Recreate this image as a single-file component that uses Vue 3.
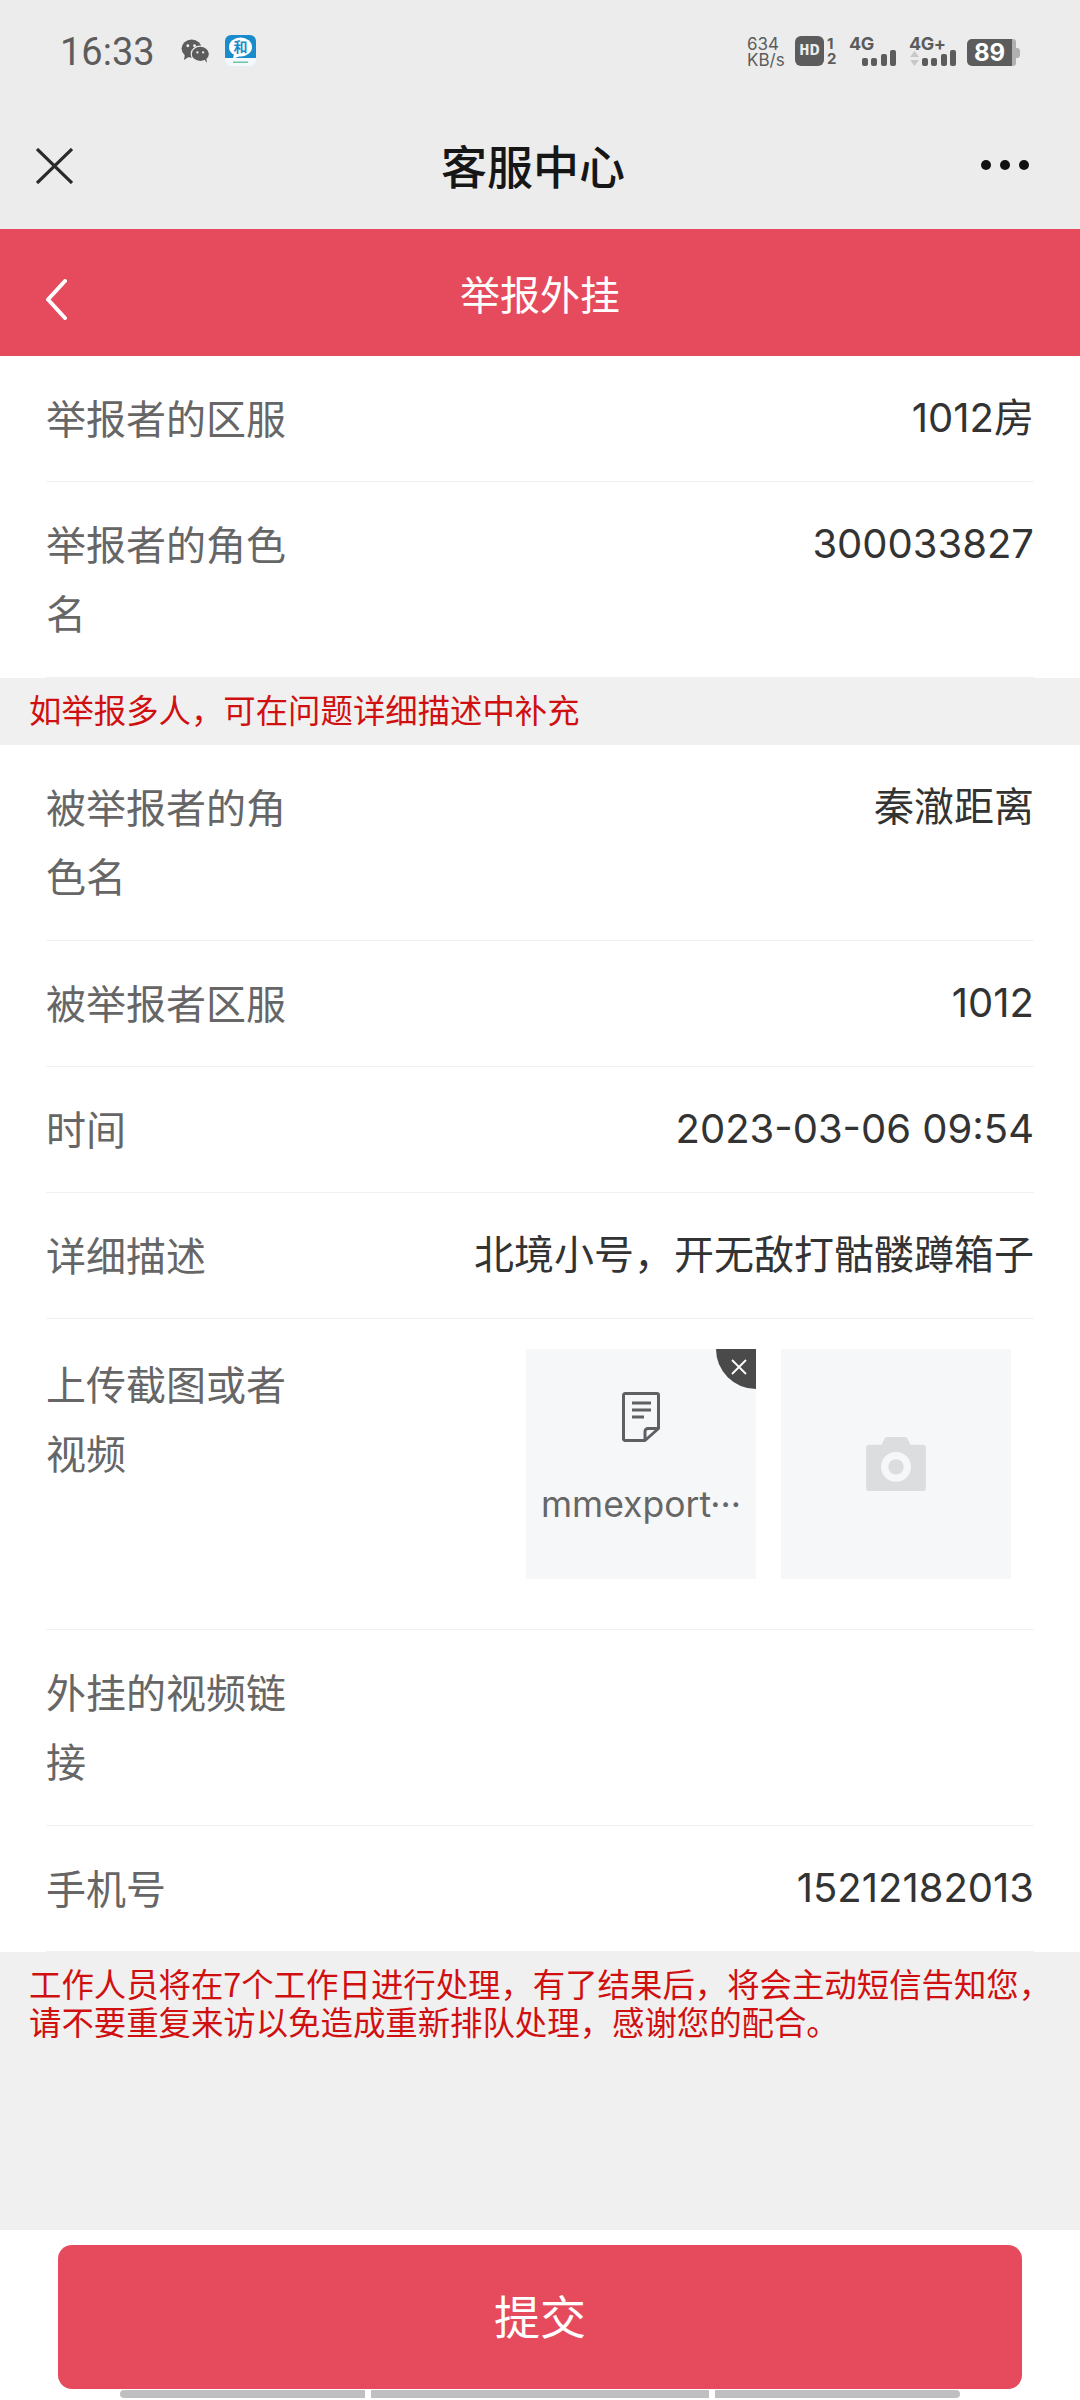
<script setup>
import { ref } from "vue";

const topRows = ref([
  { label: "举报者的区服", value: "1012房" },
  { label: "举报者的角色名", value: "300033827", tall: true },
]);

const midRows = ref([
  { label: "被举报者的角色名", value: "秦澈距离", tall: true },
  { label: "被举报者区服", value: "1012" },
  { label: "时间", value: "2023-03-06 09:54" },
  { label: "详细描述", value: "北境小号，开无敌打骷髅蹲箱子" },
]);

const bottomRows = ref([
  { label: "外挂的视频链接", value: "", tall: true },
  { label: "手机号", value: "15212182013" },
]);
</script>

<template>
  <div class="page">
    <div class="status">
      <span class="time">16:33</span>
      <svg class="wechat" width="29" height="24" viewBox="0 0 30 25">
        <ellipse cx="11" cy="10" rx="10.500" ry="9.500" fill="#5c5c5c" />
        <path d="M4 16l-1 6 6-4z" fill="#5c5c5c" />
        <ellipse cx="20" cy="15.500" rx="9.500" ry="8" fill="#5c5c5c" stroke="#ececec" stroke-width="1.200" />
        <path d="M24 21l3 4-1-6z" fill="#5c5c5c" />
        <circle cx="7" cy="7" r="1.500" fill="#ececec" />
        <circle cx="14" cy="7" r="1.500" fill="#ececec" />
        <circle cx="17" cy="14" r="1.200" fill="#ececec" />
        <circle cx="23" cy="14" r="1.200" fill="#ececec" />
      </svg>
      <svg class="he" width="31" height="31" viewBox="0 0 31 31">
        <rect width="31" height="31" rx="6" fill="#f2f8fb" />
        <path d="M6 0h19a6 6 0 0 1 6 6v17H0V6a6 6 0 0 1 6-6z" fill="#1a8ccb" />
        <ellipse cx="15.500" cy="12" rx="11.500" ry="9.500" fill="#fff" />
        <path d="M9 19l-1 5 7-3z" fill="#fff" />
        <text x="15.500" y="17" text-anchor="middle" font-size="14" font-weight="700" fill="#1a8ccb" font-family="Noto Sans CJK SC">和</text>
        <rect x="8" y="26.500" width="15" height="1.500" fill="#6cc7a4" />
      </svg>
      <span class="spacer"></span>
      <span class="speed">634<br />KB/s</span>
      <span class="hd">HD</span>
      <span class="sim">1<br />2</span>
      <span class="net">
        <b>4G</b>
        <span class="bars"><i class="b1"></i><i class="b2"></i><i class="b3"></i><i class="b4"></i></span>
      </span>
      <span class="net plus">
        <b>4G+</b>
        <svg class="arrows" width="11" height="15" viewBox="0 0 11 15">
          <path d="M5.500 0l4.500 6H1z" fill="#c8c8c8" />
          <path d="M5.500 15l4.500-6H1z" fill="#c8c8c8" />
        </svg>
        <span class="bars"><i class="b1"></i><i class="b2"></i><i class="b3"></i><i class="b4"></i></span>
      </span>
      <span class="battery"><span class="level">89</span><span class="rest"></span><span class="cap"></span></span>
    </div>

    <div class="nav">
      <svg class="close" width="37" height="36" viewBox="0 0 37 36">
        <path d="M1 1l35 34M36 1L1 35" stroke="#2a2a2a" stroke-width="3.200" fill="none" />
      </svg>
      <div class="nav-title">客服中心</div>
      <div class="dots"><i></i><i></i><i></i></div>
    </div>

    <div class="redbar">
      <svg class="back" width="22" height="41" viewBox="0 0 22 41">
        <path d="M20 2L3 20.500 20 39" stroke="#fff" stroke-width="4" stroke-linecap="round" stroke-linejoin="round" fill="none" />
      </svg>
      <div class="red-title">举报外挂</div>
      <div></div>
    </div>

    <div class="group">
      <div v-for="row in topRows" :key="row.label" class="row" :class="{ tall: row.tall }">
        <div class="label">{{ row.label }}</div>
        <div class="value">{{ row.value }}</div>
      </div>
    </div>

    <div class="note one">如举报多人，可在问题详细描述中补充</div>

    <div class="group">
      <div v-for="row in midRows" :key="row.label" class="row" :class="{ tall: row.tall }">
        <div class="label">{{ row.label }}</div>
        <div class="value">{{ row.value }}</div>
      </div>

      <div class="row upload">
        <div class="label">上传截图或者视频</div>
        <div class="thumbs">
          <div class="thumb file">
            <div class="remove">
              <svg width="16" height="16" viewBox="0 0 16 16">
                <path d="M1 1l14 14M15 1L1 15" stroke="#fff" stroke-width="1.800" fill="none" />
              </svg>
            </div>
            <svg class="doc" width="38" height="50" viewBox="0 0 38 50">
              <path d="M3 1.500h32a1.500 1.500 0 0 1 1.500 1.500v33.500L23 48.500H3A1.500 1.500 0 0 1 1.500 47V3A1.500 1.500 0 0 1 3 1.500z" fill="none" stroke="#5f6064" stroke-width="3" stroke-linejoin="round" />
              <path d="M36 36.500H26a3 3 0 0 0-3 3v9" fill="none" stroke="#5f6064" stroke-width="3" />
              <path d="M10 11h19M10 18h19M10 25h12" stroke="#5f6064" stroke-width="3" />
            </svg>
            <div class="filename">mmexport···</div>
          </div>
          <div class="thumb camera">
            <svg width="62" height="54" viewBox="0 0 62 56">
              <path d="M3 8h13l3-6q1-2 3-2h18q2 0 3 2l3 6h13a3 3 0 0 1 3 3v42a3 3 0 0 1-3 3H3a3 3 0 0 1-3-3V11a3 3 0 0 1 3-3z" fill="#dcdddf" />
              <circle cx="31" cy="31" r="15.500" fill="#f6f7f9" />
              <circle cx="31" cy="31" r="8" fill="#dcdddf" />
            </svg>
          </div>
        </div>
      </div>

      <div v-for="row in bottomRows" :key="row.label" class="row" :class="{ tall: row.tall }">
        <div class="label">{{ row.label }}</div>
        <div class="value">{{ row.value }}</div>
      </div>
    </div>

    <div class="note two">工作人员将在7个工作日进行处理，有了结果后，将会主动短信告知您，请不要重复来访以免造成重新排队处理，感谢您的配合。</div>

    <div class="footer">
      <button class="submit">提交</button>
      <div class="gesture"><i class="g1"></i><i class="g2"></i><i class="g3"></i></div>
    </div>
  </div>
</template>

<style scoped>
.page {
  width: 1080px;
  height: 2400px;
  display: flex;
  flex-direction: column;
  overflow: hidden;
  background: #fff;
  font-family: Inter, "Noto Sans CJK SC", sans-serif;
}

.status {
  height: 110px;
  background: #ececec;
  display: flex;
  align-items: flex-start;
  padding: 36px 60px 0 60px;
  box-sizing: border-box;
  color: #5c5c5c;
}

.time {
  width: 93px;
  font-family: Roboto, sans-serif;
  font-size: 38px;
  line-height: 33px;
  margin-right: 28px;
}

.wechat {
  margin: 3px 15px 0 0;
}

.he {
  margin-top: -1px;
}

.spacer {
  flex: 1;
}

.speed {
  width: 48px;
  font-size: 17px;
  line-height: 16px;
}

.hd {
  width: 29px;
  height: 30px;
  border-radius: 6px;
  background: #5c5c5c;
  color: #ececec;
  font: 700 17px/30px "Liberation Mono", monospace;
  text-align: center;
}

.sim {
  width: 11px;
  margin-left: 3px;
  font-size: 15px;
  line-height: 15px;
  font-weight: 700;
}

.net {
  position: relative;
  width: 47px;
  height: 30px;
  margin-left: 11px;
}

.net.plus {
  margin-left: 13px;
}

.net b {
  display: block;
  font-size: 18px;
  line-height: 16px;
  letter-spacing: -0.5px;
  font-weight: 700;
}

.arrows {
  position: absolute;
  left: 0;
  bottom: 0;
}

.bars {
  position: absolute;
  right: 0;
  bottom: 0;
  display: flex;
  align-items: flex-end;
  gap: 3.500px;
}

.bars i {
  width: 6px;
  border-radius: 2px;
  background: #5c5c5c;
}

.b1 {
  height: 8px;
}

.b2 {
  height: 8px;
}

.b3 {
  height: 12px;
}

.b4 {
  height: 16px;
}

.battery {
  display: flex;
  align-items: center;
  margin: 3px 0 0 11px;
  height: 27px;
}

.level {
  width: 45px;
  height: 27px;
  border-radius: 5px 0 0 5px;
  background: #5c5c5c;
  color: #fff;
  font-size: 24px;
  line-height: 27px;
  font-weight: 700;
  text-align: center;
}

.rest {
  width: 4px;
  height: 27px;
  background: #b0b0b0;
  border-radius: 0 3px 3px 0;
}

.cap {
  width: 4px;
  height: 10px;
  background: #b0b0b0;
  border-radius: 0 3px 3px 0;
}

.nav {
  height: 119px;
  background: #ececec;
  display: flex;
  align-items: center;
  padding: 0 51px 0 36px;
  box-sizing: border-box;
}

.close {
  margin-top: -8px;
}

.nav-title {
  flex: 1;
  padding: 0 0 12px 12px;
  text-align: center;
  font-family: "Noto Sans CJK SC", sans-serif;
  font-size: 46px;
  font-weight: 500;
  color: #161616;
}

.dots {
  display: flex;
  gap: 9px;
  margin-top: -10px;
}

.dots i {
  width: 10px;
  height: 10px;
  border-radius: 50%;
  background: #111;
}

.redbar {
  height: 127px;
  background: #e64b5d;
  display: grid;
  grid-template-columns: 1fr auto 1fr;
  align-items: center;
  padding-left: 45px;
  box-sizing: border-box;
}

.back {
  margin-top: 14px;
}

.red-title {
  font-family: "Noto Sans CJK SC", sans-serif;
  font-size: 40px;
  color: #fff;
  margin-left: -45px;
}

.group {
  padding: 0 46px;
  background: #fff;
}

.row {
  display: flex;
  justify-content: space-between;
  align-items: flex-start;
  padding: 27px 0 29px;
  border-bottom: 1px solid #f0f0f0;
  font-size: 40px;
  line-height: 69px;
}

.row.tall {
  padding-bottom: 30px;
}

.label {
  width: 242px;
  color: #666;
  font-family: "Noto Sans CJK SC", sans-serif;
}

.value {
  color: #333;
  text-align: right;
  font-family: Inter, "Noto Sans CJK SC", sans-serif;
}

.row.upload {
  padding: 30px 0 50px;
}

.thumbs {
  display: flex;
  gap: 25px;
  padding-right: 23px;
}

.thumb {
  position: relative;
  width: 230px;
  height: 230px;
  background: #f6f7f9;
  display: flex;
  flex-direction: column;
  align-items: center;
}

.thumb.camera {
  justify-content: center;
}

.remove {
  position: absolute;
  top: 0;
  right: 0;
  width: 40px;
  height: 40px;
  background: #4a4a4a;
  border-bottom-left-radius: 40px;
  display: flex;
  align-items: center;
  justify-content: center;
}

.remove svg {
  margin: -4px 0 0 6px;
}

.doc {
  margin-top: 43px;
}

.filename {
  margin-top: 43px;
  font-family: Inter, sans-serif;
  font-size: 35.500px;
  line-height: 40px;
  color: #666;
  white-space: nowrap;
}

.note {
  background: #f0f0f0;
  color: #d01010;
  font-family: "Noto Sans CJK SC", sans-serif;
  font-size: 32.400px;
  line-height: 38px;
  padding: 0 20px 0 29px;
}

.note.one {
  height: 67px;
  line-height: 62px;
  flex: none;
}

.note.two {
  flex: 1;
  padding-top: 12px;
}

.footer {
  height: 170px;
  flex: none;
  padding: 15px 58px 0;
  box-sizing: border-box;
  background: #fff;
}

.submit {
  display: block;
  width: 964px;
  height: 144px;
  padding: 0 0 6px;
  border: none;
  border-radius: 14px;
  background: #e64b5d;
  color: #fff;
  font-family: "Noto Sans CJK SC", sans-serif;
  font-size: 46px;
}

.gesture {
  display: flex;
  gap: 6px;
  margin: 1px 0 0 62px;
}

.gesture i {
  height: 8px;
  background: #bfbfc1;
}

.g1 {
  width: 245px;
  border-radius: 4px 0 0 4px;
}

.g2 {
  width: 338px;
}

.g3 {
  width: 245px;
  border-radius: 0 4px 4px 0;
}
</style>
